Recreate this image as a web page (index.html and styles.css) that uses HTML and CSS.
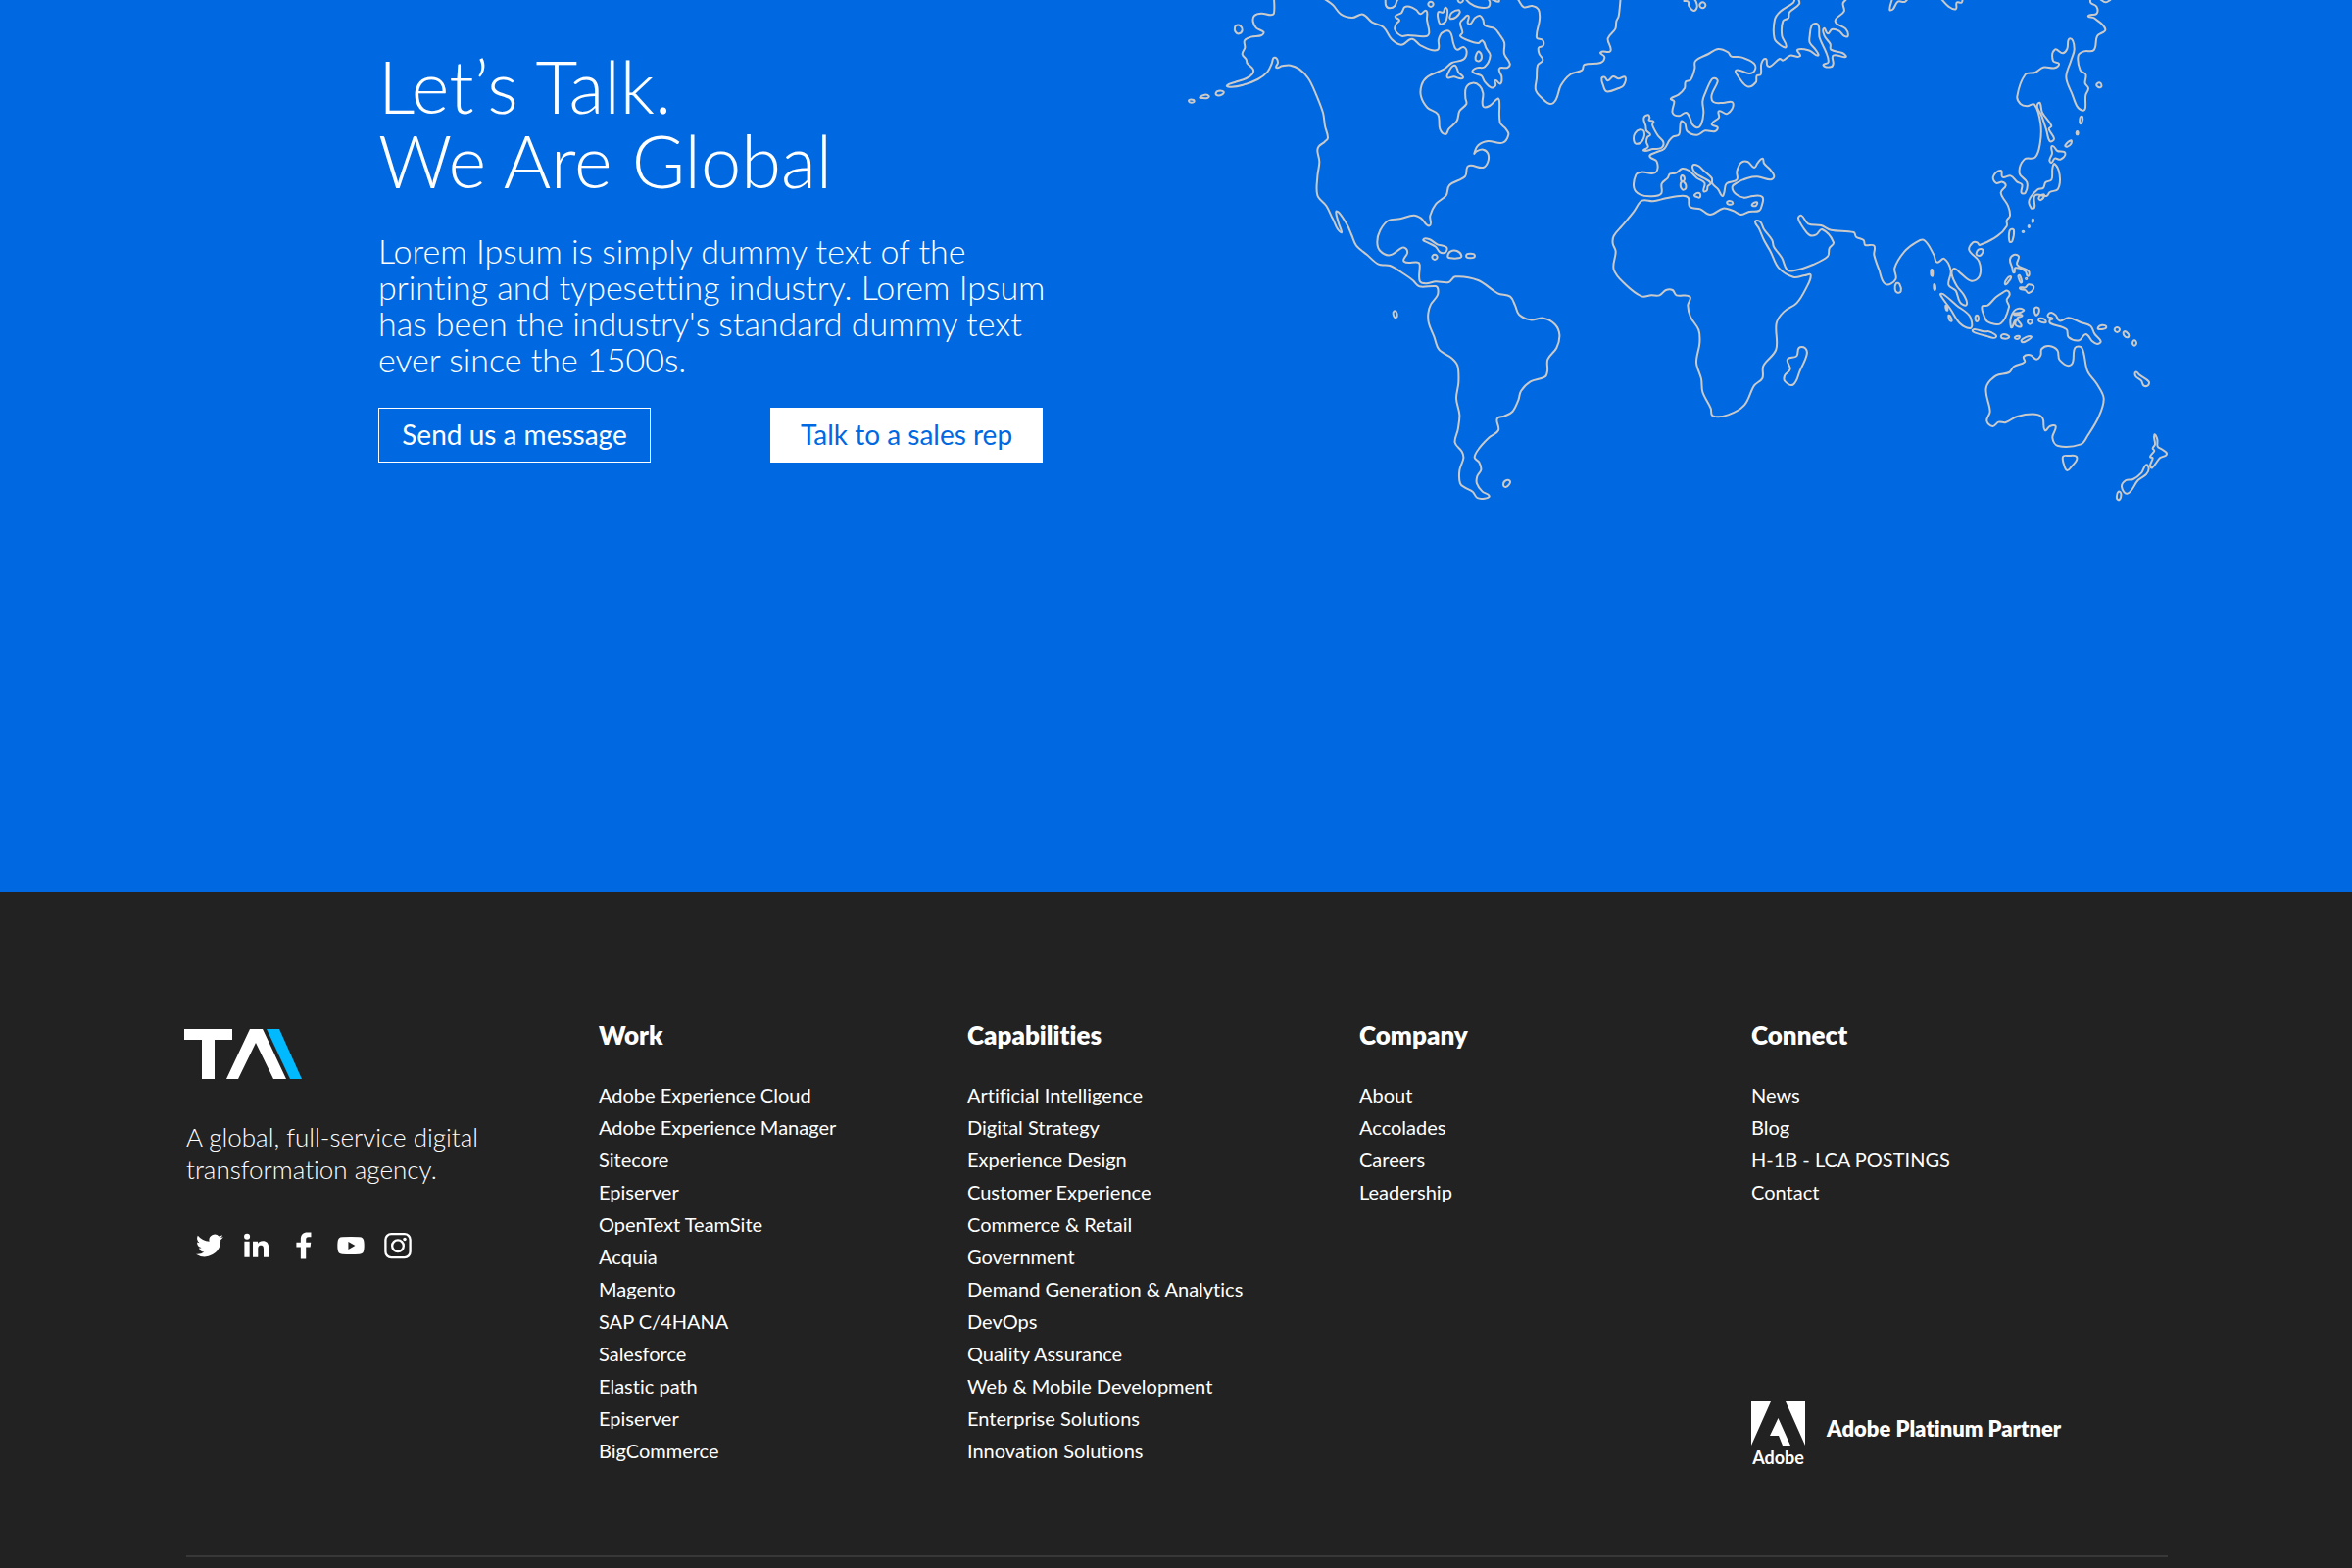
FILE: index.html
```html
<!DOCTYPE html>
<html lang="en">
<head>
    <meta charset="UTF-8">
    <meta name="viewport" content="width=device-width, initial-scale=1.0">
    <title>Let’s Talk. We Are Global</title>
    <link rel="stylesheet" href="styles.css">
</head>
<body>
    <section class="global">
        <div class="global-text">
            <h1>Let’s Talk.<br>We Are Global</h1>
            <p>Lorem Ipsum is simply dummy text of the<br>
                printing and typesetting industry. Lorem Ipsum<br>
                has been the industry's standard dummy text<br>
                ever since the 1500s.</p>
            <div class="global-actions">
                <button type="button" class="btn btn-outline">Send us a message</button>
                <button type="button" class="btn btn-solid">Talk to a sales rep</button>
            </div>
        </div>
        <svg class="world-map" id="worldMap" viewBox="0 0 3060 1560" role="img" aria-label="World map"></svg>
    </section>

    <footer class="footer">
        <div class="footer-grid">
            <div class="brand">
                <a href="#" class="logo" aria-label="Home">
                    <svg viewBox="0 0 120 51">
                        <path fill="#fff" d="M0 0H49V11H31V51H18V11H0z"/>
                        <path fill="#fff" d="M67 0H80L104 51H91L73 14L55 51H43z"/>
                        <path fill="#00b9ff" d="M84 0H97L120 51H108z"/>
                    </svg>
                </a>
                <p class="tagline">A global, full-service digital<br>transformation agency.</p>
                <div class="social">
                    <a href="#" aria-label="Twitter">
                        <svg viewBox="0 0 24 24"><path d="M23.9 4.6a10 10 0 0 1-2.8.8 5 5 0 0 0 2.1-2.7 10 10 0 0 1-3.1 1.2 4.9 4.9 0 0 0-8.4 4.5A14 14 0 0 1 1.6 3.2a4.9 4.9 0 0 0 1.5 6.5 4.9 4.9 0 0 1-2.2-.6v.1a4.9 4.9 0 0 0 3.9 4.8 5 5 0 0 1-2.2.1 4.9 4.9 0 0 0 4.6 3.4A9.9 9.9 0 0 1 0 19.5 14 14 0 0 0 21.5 7.1a10 10 0 0 0 2.4-2.5z"/></svg>
                    </a>
                    <a href="#" aria-label="LinkedIn">
                        <svg viewBox="0 0 24 24"><path d="M1.200 8.300h4.500V22H1.200zM3.500 1.500a2.600 2.600 0 1 1 0 5.200 2.600 2.600 0 0 1 0-5.200zM8.600 8.300h4.300v1.900c.8-1.400 2.300-2.300 4.300-2.300 4.300 0 5.300 2.800 5.300 6.500V22H18v-6.700c0-1.700-.1-3.600-2.300-3.600-2.300 0-2.600 1.700-2.600 3.500V22H8.600z"/></svg>
                    </a>
                    <a href="#" aria-label="Facebook">
                        <svg viewBox="0 0 24 24"><path d="M9.300 23.500V13.300H5.500V9.200h3.800V6.500C9.300 2.500 11.500.4 15 .4h3.400v4h-2.300c-1.800 0-2.200.9-2.200 2.200v2.600h4.300l-.5 4.100h-3.800v10.200z"/></svg>
                    </a>
                    <a href="#" aria-label="YouTube">
                        <svg viewBox="0 0 24 24"><path fill-rule="evenodd" d="M4.500 4.500Q12 3.900 19.500 4.500 23.200 4.600 23.500 8.500 23.900 12 23.500 15.500 23.200 19.300 19.500 19.500 12 20.100 4.500 19.500 .8 19.300.5 15.500.1 12 .5 8.500.8 4.600 4.500 4.500zM9.800 8.600v6.800l6-3.400z"/></svg>
                    </a>
                    <a href="#" aria-label="Instagram">
                        <svg viewBox="0 0 24 24"><g fill="none" stroke="#fff" stroke-width="2"><rect x="1.200" y="1.800" width="21.600" height="20.600" rx="5"/><circle cx="12" cy="12.200" r="5"/></g><circle cx="18" cy="6.500" r="1.500"/></svg>
                    </a>
                </div>
            </div>

            <nav class="footer-col" aria-label="Work">
                <h2>Work</h2>
                <ul>
                    <li><a href="#">Adobe Experience Cloud</a></li>
                    <li><a href="#">Adobe Experience Manager</a></li>
                    <li><a href="#">Sitecore</a></li>
                    <li><a href="#">Episerver</a></li>
                    <li><a href="#">OpenText TeamSite</a></li>
                    <li><a href="#">Acquia</a></li>
                    <li><a href="#">Magento</a></li>
                    <li><a href="#">SAP C/4HANA</a></li>
                    <li><a href="#">Salesforce</a></li>
                    <li><a href="#">Elastic path</a></li>
                    <li><a href="#">Episerver</a></li>
                    <li><a href="#">BigCommerce</a></li>
                </ul>
            </nav>

            <nav class="footer-col" aria-label="Capabilities">
                <h2>Capabilities</h2>
                <ul>
                    <li><a href="#">Artificial Intelligence</a></li>
                    <li><a href="#">Digital Strategy</a></li>
                    <li><a href="#">Experience Design</a></li>
                    <li><a href="#">Customer Experience</a></li>
                    <li><a href="#">Commerce &amp; Retail</a></li>
                    <li><a href="#">Government</a></li>
                    <li><a href="#">Demand Generation &amp; Analytics</a></li>
                    <li><a href="#">DevOps</a></li>
                    <li><a href="#">Quality Assurance</a></li>
                    <li><a href="#">Web &amp; Mobile Development</a></li>
                    <li><a href="#">Enterprise Solutions</a></li>
                    <li><a href="#">Innovation Solutions</a></li>
                </ul>
            </nav>

            <nav class="footer-col" aria-label="Company">
                <h2>Company</h2>
                <ul>
                    <li><a href="#">About</a></li>
                    <li><a href="#">Accolades</a></li>
                    <li><a href="#">Careers</a></li>
                    <li><a href="#">Leadership</a></li>
                </ul>
            </nav>

            <nav class="footer-col" aria-label="Connect">
                <h2>Connect</h2>
                <ul>
                    <li><a href="#">News</a></li>
                    <li><a href="#">Blog</a></li>
                    <li><a href="#">H-1B - LCA POSTINGS</a></li>
                    <li><a href="#">Contact</a></li>
                </ul>
                <div class="partner">
                    <div class="adobe">
                        <svg viewBox="0 0 55 45" aria-hidden="true">
                            <path fill="#fff" d="M0 0H20L0 45zM35 0H55V45zM27.500 17L40 45H32L28 35H19z"/>
                        </svg>
                        <span>Adobe</span>
                    </div>
                    <strong>Adobe Platinum Partner</strong>
                </div>
            </nav>
        </div>
    </footer>
    <script src="map.js"></script>
</body>
</html>
```

FILE: styles.css
```css
* {
    box-sizing: border-box;
}

body {
    margin: 0;
    background: #222;
    color: #fff;
    font-family: Lato, 'Open Sans', sans-serif;
    font-variant-ligatures: none;
}

h1,
h2,
p,
ul {
    margin: 0;
    padding: 0;
}

a {
    color: inherit;
    text-decoration: none;
}

/* Contact section */
.global {
    display: grid;
    grid-template-columns: 814fr 1020fr;
    align-items: start;
    min-height: 910px;
    padding: 0 180px 0 386px;
    background: #0069e2;
}

.global-text {
    padding-top: 50px;
}

.global-text h1 {
    font-size: 74px;
    font-weight: 300;
    line-height: 76px;
}

.global-text p {
    margin-top: 35px;
    font-size: 34px;
    font-weight: 300;
    line-height: 37px;
    white-space: nowrap;
}

.global-actions {
    display: flex;
    gap: 122px;
    margin-top: 31px;
}

.btn {
    width: 278px;
    height: 56px;
    padding: 0 0 2px;
    border: 1px solid #fff;
    font-family: inherit;
    font-size: 28px;
    cursor: pointer;
}

.btn-outline {
    background: transparent;
    color: #fff;
}

.btn-solid {
    background: #fff;
    color: #0069e2;
}

.world-map {
    display: block;
    width: 100%;
    fill: none;
    stroke: #cacaca;
    stroke-width: 6;
    stroke-linejoin: round;
    stroke-linecap: round;
}

/* Footer */
.footer {
    padding: 130px 188px 8px 190px;
}

.footer-grid {
    display: grid;
    grid-template-columns: 421fr 376fr 400fr 400fr 425fr;
    padding-bottom: 90px;
    border-bottom: 2px solid #383838;
}

.logo {
    display: block;
    width: 120px;
    margin: 10px 0 0 -2px;
}

.logo svg {
    display: block;
}

.tagline {
    margin-top: 43px;
    font-size: 26px;
    font-weight: 300;
    line-height: 33px;
}

.social {
    display: flex;
    gap: 20px;
    margin: 47px 0 0 10px;
}

.social svg {
    display: block;
    width: 28px;
    height: 28px;
    fill: #fff;
}

.footer-col {
    display: flex;
    flex-direction: column;
}

.footer-col h2 {
    font-size: 26px;
    font-weight: 800;
    line-height: 33px;
}

.footer-col ul {
    margin-top: 28px;
    list-style: none;
}

.footer-col li {
    font-size: 20px;
    line-height: 33px;
}

.partner {
    display: flex;
    align-items: flex-start;
    gap: 22px;
    margin-top: auto;
}

.adobe {
    width: 55px;
    font-size: 18px;
    font-weight: 700;
    line-height: 19px;
    text-align: center;
}

.adobe svg {
    display: block;
    margin-bottom: 3px;
}

.partner strong {
    margin-top: 11px;
    font-size: 22px;
    font-weight: 800;
    line-height: 33px;
}
```

FILE: map.js
```js
// Coastlines, grouped by region. Each group has its own origin on the map;
// a trailing "z" closes the outline.
const regions = [
    { x: 0, y: 0, lines: [
        // mainland Americas
        '300,-10 300,40 290,46 262,41 240,48 236,66 246,86 268,98 262,108 230,113 210,124 211,146 203,166 215,182 218,194 236,212 234,226 215,240 180,252 156,262 170,266 205,260 250,243 280,220 293,195 299,177 308,179 312,192 307,207 325,202 350,200 378,212 405,240 425,280 450,345 456,385 465,422 455,434 437,448 433,462 439,495 433,540 433,598 460,630 480,670 504,711 497,680 490,648 500,652 525,690 538,720 552,752 585,780 620,809 655,813 700,840 725,858 745,877 795,876 802,885 800,905 780,932 772,960 774,990 790,1030 805,1070 845,1097 862,1120 865,1170 858,1220 868,1270 863,1315 854,1355 875,1382 880,1402 868,1440 870,1480 885,1493 908,1505 922,1524 945,1526 959,1518 938,1505 921,1480 922,1458 934,1438 928,1415 914,1400 930,1370 960,1338 987,1317 983,1282 1005,1274 1030,1260 1048,1225 1056,1197 1085,1168 1130,1153 1137,1135 1138,1100 1165,1065 1174,1025 1160,993 1125,974 1085,979 1050,963 1038,935 1023,908 985,898 925,858 855,847 835,864 795,862 765,868 746,860 746,810 740,803 698,800 708,775 705,762 693,758 655,781 625,768 616,740 625,705 650,675 685,670 728,659 750,668 776,691 778,660 795,625 827,598 837,567 885,540 895,508 940,513 955,495 955,470 940,458 920,463 913,470 925,445 955,432 1000,437 1018,412 1010,395 992,375 990,310 985,302 960,324 940,325 940,285 930,263 908,254 888,268 886,300 889,318 868,340 860,370 835,395 825,411 808,395 802,350 770,330 750,295 752,260 770,235 820,212 845,192 880,182 890,160 880,144 860,152 850,135 838,97 815,100 804,120 800,153 750,140 722,119 690,137 660,120 635,83 600,68 572,44 540,54 505,44 480,15 455,-3',
        '186,77 198,80 203,92 193,103 182,97 180,84z',
        '122,285 130,278 146,281 140,290 127,292z',
        '73,298 88,290 101,294 96,300 80,300z',
        '40,306 54,306 55,312 42,313z',
        // Arctic islands
        '735,30 748,43 766,33 768,60 775,100 766,111 710,108 690,110 670,90 675,72 684,62 671,50 690,40 700,22 715,20z',
        '641,-5 643,18 655,25 670,18 678,0 690,-8',
        '780,5 788,13 780,21 772,13z',
        '803,37 818,38 824,24 831,30 830,50 825,66 810,74 803,60z',
        '838,52 845,38 865,31 869,38 858,52 842,58z',
        '871,-8 879,0 871,8 863,0z',
        '885,-5 900,10 925,22 955,22 961,8 955,-5',
        '965,-3 988,5 988,-5',
        '870,70 880,58 895,48 893,70 901,74 915,55 930,48 940,60 945,78 975,87 990,105 1005,130 1005,165 1022,195 1015,207 990,210 997,235 993,256 978,246 978,262 965,268 945,250 935,232 908,220 920,208 945,205 962,170 950,148 938,124 925,132 890,122 870,110 877,100z',
        '920,165 928,158 936,175 928,187 917,182z',
        '852,200 865,222 878,239 850,235 832,238 831,228z',
        // Greenland
        '1048,0 1065,22 1090,18 1110,30 1113,60 1104,115 1122,122 1124,140 1110,146 1112,165 1123,184 1107,200 1104,240 1101,275 1120,300 1145,318 1163,305 1178,262 1207,228 1243,215 1250,198 1300,192 1312,175 1300,160 1330,156 1322,118 1345,88 1348,65 1355,50 1361,-5',
        // Caribbean
        '757,733 775,732 800,748 828,757 825,772 808,772 795,755 770,742z',
        '792,779 800,787 792,795 784,787z',
        '832,785 840,770 860,768 874,783 865,790 840,790z',
        '888,783 901,776 915,783 901,790z'
    ] },
    { x: 540, y: 750, lines: [
        '127,203 134,204 137,218 130,222 125,212z',
        '462,735 468,722 482,722 480,733 470,741z',
        // Madagascar
        '1367,315 1385,315 1391,335 1370,385 1350,427 1325,418 1323,400 1340,380 1332,350 1360,340z'
    ] },
    { x: 1200, y: 0, lines: [
        // Pacific coast of Asia, round India, Arabia and Africa, to northern Europe
        '1600,-8 1600,8 1618,20 1618,42 1593,48 1610,55 1645,90 1620,110 1610,153 1580,157 1562,170 1568,215 1585,228 1583,255 1593,270 1585,290 1575,338 1540,280 1525,235 1540,185 1550,150 1537,118 1528,150 1515,163 1490,152 1485,187 1503,195 1490,208 1455,206 1430,222 1400,228 1375,295 1385,318 1405,325 1428,320 1447,380 1445,440 1430,482 1397,488 1382,530 1405,558 1400,590 1388,590 1390,565 1375,557 1355,538 1330,542 1325,522 1302,540 1310,560 1330,557 1340,568 1325,590 1347,630 1353,660 1343,675 1343,692 1315,722 1260,750 1253,742 1240,742 1228,765 1258,800 1260,845 1235,860 1200,835 1182,822 1175,840 1190,875 1213,905 1220,933 1200,925 1187,890 1165,872 1172,830 1152,792 1130,803 1120,780 1090,735 1065,742 1030,770 1000,820 1003,855 972,870 952,825 937,780 937,752 910,750 905,735 882,725 875,711 805,704 775,690 735,685 715,660 705,668 722,700 740,720 760,718 778,702 813,742 800,760 795,785 750,810 690,829 670,825 655,790 630,755 625,735 600,702 588,678 573,678 585,700 600,735 620,770 645,820 690,848 725,843 743,842 730,880 700,928 660,955 638,990 637,1070 598,1120 595,1158 570,1180 540,1240 490,1270 443,1273 437,1250 412,1200 408,1160 393,1110 403,1050 400,1010 375,970 367,935 373,908 332,904 320,888 300,888 280,904 255,904 225,907 175,870 140,825 146,770 137,745 140,722 165,692 200,650 222,617 235,613 260,616 300,607 350,599 368,605 373,633 405,640 435,657 475,638 505,645 530,657 555,648 585,645 593,630 595,603 565,600 540,605 515,595 503,572 520,558 550,545 580,541 620,550 631,540 620,520 600,500 595,485 580,500 570,513 550,495 530,498 517,525 517,550 485,562 478,590 472,600 460,580 442,562 440,545 415,522 400,508 382,507 390,530 415,545 437,560 428,570 425,583 415,585 418,560 395,545 370,522 350,516 330,530 312,532 305,545 287,562 285,593 255,601 220,595 202,575 208,535 225,527 268,528 272,495 250,478 268,467 295,455 310,430 322,418 340,412 346,372 358,378 365,402 395,413 420,400 450,402 458,390 440,380 462,360 462,340 488,348 505,315 475,315 445,312 440,290 458,250 452,240 440,243 420,285 412,310 415,345 408,380 395,391 380,380 375,365 362,345 340,355 320,345 325,310 315,302 338,290 357,270 360,250 375,245 388,210 390,187 430,165 460,150 490,160 500,173 530,175 570,195 572,215 555,225 515,215 522,235 550,265 575,252 578,232 590,228 592,195 605,180 610,200 620,203 648,180 658,185 680,170 710,172 703,152 740,155 765,170 760,155 740,130 740,110 746,78 760,72 768,82 770,115 790,160 797,190 782,200 805,205 812,195 812,170 850,174 840,162 805,152 803,135 785,110 783,87 795,103 808,90 830,95 845,110 857,110 850,88 818,65 845,35 842,10 855,-5',
        // Iceland, Britain, Ireland
        '103,240 112,236 122,247 138,234 155,241 175,236 170,262 155,270 118,280 108,262z',
        '232,362 245,352 250,360 248,368 262,372 258,382 275,415 292,435 285,453 260,456 232,461 245,450 240,435 243,420 252,412 240,400 238,385z',
        '205,408 220,397 233,403 228,430 208,440 201,425z',
        // Mediterranean islands
        '345,545 350,537 357,548 350,555z',
        '345,560 355,557 361,575 350,580z',
        '387,597 402,591 404,604 395,603z',
        '487,618 500,616 504,624 490,625z',
        '563,627 578,619 575,630z',
        // Svalbard and Novaya Zemlya
        '355,3 368,5 370,18 385,33 395,22 392,5 385,-5',
        '412,7 421,16 412,25 403,16z',
        '705,-5 708,12 678,38 675,55 658,65 655,110 668,143 650,138 632,118 633,60 650,35 690,8 695,-5'
    ] },
    { x: 2100, y: 0, lines: [
        '93,-5 85,30 95,28 110,5 130,6 140,-3',
        '243,-3 265,20 287,28 290,8 305,8 308,-4',
        '730,-2 745,7 760,0',
        '718,258 728,253 733,265 724,267z',
        '670,357 675,358 674,372 668,378 667,365z',
        '657,403 661,403 661,411 657,411z',
        '622,445 640,430 640,440 628,449z',
        // Sakhalin and Japan
        '538,318 545,315 552,345 580,385 572,395 588,425 575,432 565,400 550,355 537,330z',
        '582,447 598,462 622,468 608,488 590,485 580,498 574,490 582,470z',
        '590,502 605,535 600,578 575,588 565,600 530,598 528,635 518,637 512,612 538,580 555,575 562,558 580,550 583,515z',
        '541,607 548,597 558,597 548,612z',
        '521,677 523,671 525,674 523,680z',
        '509,693 511,690 513,693 511,696z',
        '491,709 493,707 496,709 493,711z',
        '455,702 465,705 460,738 452,740 450,715z',
        '350,775 358,763 370,765 365,780 354,782z',
        '214,825 217,835 214,845 211,833z',
        '222,870 225,882 222,888 220,878z',
        '105,867 115,870 119,892 108,896 101,885z'
    ] },
    { x: 1920, y: 690, lines: [
        // Philippines
        '640,130 633,105 645,90 660,95 655,120 690,140 688,155 680,140 650,130 645,145z',
        '618,180 625,162 636,157 630,170z',
        '660,153 668,165 668,175 662,168z',
        '681,163 683,161 685,163 683,165z',
        '663,192 680,190 690,181 706,188 690,207 680,198z',
        // Indonesia
        '420,212 428,210 470,245 508,275 517,305 510,315 480,300 450,255z',
        '436,246 440,246 442,260 438,258z',
        '445,276 450,278 455,292 448,290z',
        '531,275 537,285 532,294 527,285z',
        '548,248 565,245 590,220 612,205 625,200 632,212 623,228 630,250 605,300 565,295 553,275z',
        '636,312 635,285 650,258 675,258 665,267 645,272 670,275 655,285 668,308 650,305 650,290 640,312z',
        '710,252 722,255 715,275 708,265z',
        '694,288 701,295 694,302 687,295z',
        '722,285 738,287 742,297 722,293z',
        '518,322 525,318 555,325 570,325 590,342 560,338 525,328z',
        '606,337 620,334 630,343 610,346z',
        '648,342 662,339 660,346 650,347z',
        '668,352 680,343 698,340 690,350 672,358z',
        // New Guinea and the Pacific
        '750,272 760,267 773,275 785,292 812,283 850,297 880,308 892,332 911,355 900,363 885,355 865,333 845,352 812,342 806,318 757,300 755,290 763,285 750,280z',
        '902,315 915,305 928,312 912,318z',
        '961,312 969,319 961,327 953,319z',
        '982,325 995,332 995,342 983,338z',
        '1014,352 1020,360 1014,368 1008,360z',
        '1018,449 1030,458 1058,478 1055,490 1042,490 1035,475 1018,462z',
        // Australia and Tasmania
        '675,402 695,397 714,410 727,398 730,378 752,369 778,382 785,412 820,427 832,375 853,375 870,445 900,487 920,530 905,585 870,645 850,670 780,675 763,650 773,615 755,615 740,627 733,590 710,578 655,585 620,603 598,602 580,615 562,598 572,570 560,498 590,460 630,450 645,432 678,418z',
        '795,708 810,705 838,710 820,740 808,750 800,738z',
        // New Zealand
        '1075,641 1084,655 1085,677 1097,685 1113,700 1092,712 1068,742 1062,735 1070,712 1062,708 1075,690 1070,683 1077,670z',
        '1050,733 1058,745 1050,762 1025,780 993,821 975,800 988,780 1010,777 1035,758z',
        '960,835 965,815 973,822 968,840z'
    ] }
];

// Turns a list of points into a smooth curve that passes through all of them
function toPath(line) {
    const closed = line.endsWith('z');
    const pts = line.replace('z', '').split(' ').map(p => p.split(',').map(Number));
    const n = pts.length;
    const at = i => closed ? pts[(i + n) % n] : pts[Math.max(0, Math.min(n - 1, i))];
    let d = `M${pts[0]}`;
    for (let i = 0; i < (closed ? n : n - 1); i++) {
        const [a, b, c, e] = [at(i - 1), at(i), at(i + 1), at(i + 2)];
        // keep the handles short so tight corners don't loop
        const len = Math.hypot(c[0] - b[0], c[1] - b[1]);
        const handle = (p, q) => {
            const l = Math.hypot(q[0] - p[0], q[1] - p[1]) || 1;
            return [(q[0] - p[0]) / l * len / 3, (q[1] - p[1]) / l * len / 3];
        };
        const h1 = handle(a, c);
        const h2 = handle(b, e);
        d += `C${b[0] + h1[0]},${b[1] + h1[1]} ${c[0] - h2[0]},${c[1] - h2[1]} ${c}`;
    }
    return closed ? d + 'z' : d;
}

document.getElementById('worldMap').innerHTML = regions.map(r =>
    `<g transform="translate(${r.x} ${r.y})">` +
    r.lines.map(line => `<path d="${toPath(line)}"/>`).join('') +
    '</g>'
).join('');
```
